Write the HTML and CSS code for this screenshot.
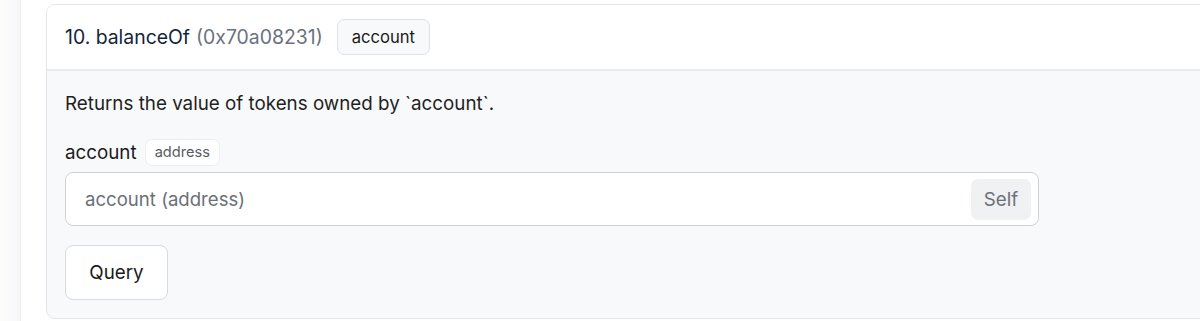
FILE: index.html
```html
<!DOCTYPE html>
<html>
<head>
<meta charset="utf-8">
<link rel="stylesheet" href="styles.css">
</head>
<body>
<div class="page">
  <aside class="rail"></aside>
  <main class="main">
    <section class="card">
      <header class="card-head">
        <span class="fn-name">10. balanceOf</span>
        <span class="fn-sel">(0x70a08231)</span>
        <span class="arg-chip">account</span>
      </header>
      <div class="card-body">
        <p class="desc">Returns the value of tokens owned by `account`.</p>
        <div class="field-label">
          <span class="label-text">account</span>
          <span class="type-chip">address</span>
        </div>
        <div class="input-wrap">
          <span class="placeholder">account (address)</span>
          <span class="self-btn">Self</span>
        </div>
        <div class="actions">
          <button class="query-btn">Query</button>
        </div>
      </div>
    </section>
  </main>
</div>
</body>
</html>
```

FILE: styles.css
```css
* { box-sizing: border-box; }
html, body {
  margin: 0;
  padding: 0;
  background: #ffffff;
  font-family: Inter, "Noto Sans", sans-serif;
  overflow: hidden;
}
.page {
  display: flex;
  width: 1200px;
  height: 321px;
}
.rail {
  width: 21px;
  flex: none;
  background: linear-gradient(to right, #fdfcfb, #f7f7f9);
  border-right: 1px solid #eeeef1;
}
.main {
  flex: 1;
  padding: 4px 0 0 25px;
  min-width: 0;
}
.card {
  width: 1200px;
  height: 315px;
  border: 1px solid #e4e5e9;
  border-radius: 9px;
  overflow: hidden;
  background: #f8f9fa;
  display: flex;
  flex-direction: column;
}
.card-head {
  height: 66px;
  flex: none;
  background: #ffffff;
  border-bottom: 2px solid #ebecf0;
  display: flex;
  align-items: center;
  padding-left: 18px;
  font-size: 19.4px;
}
.fn-name { color: #14253d; }
.fn-sel { color: #6b7280; margin-left: 6px; }
.arg-chip {
  margin-left: 14px;
  height: 36px;
  padding: 0 14px;
  display: inline-flex;
  align-items: center;
  background: #f8f9fa;
  border: 1px solid #dfe1e5;
  border-radius: 7px;
  font-size: 16.6px;
  color: #1a1a1a;
}
.card-body {
  padding: 22px 0 0 18px;
  display: flex;
  flex-direction: column;
}
.desc {
  margin: 0;
  font-size: 18.8px;
  color: #1f1f1f;
  line-height: 22px;
}
.field-label {
  margin-top: 23px;
  display: flex;
  align-items: center;
  gap: 8px;
  height: 28px;
}
.label-text { font-size: 18.8px; color: #1a1a1a; }
.type-chip {
  height: 27px;
  padding: 0 9px;
  display: inline-flex;
  align-items: center;
  background: #ffffff;
  border: 1px solid #eceef1;
  border-radius: 7px;
  font-size: 14.6px;
  color: #555b63;
}
.input-wrap {
  margin-top: 6px;
  width: 974px;
  height: 54px;
  background: #ffffff;
  border: 1px solid #cfd1d5;
  border-radius: 8px;
  display: flex;
  align-items: center;
  justify-content: space-between;
  padding: 0 7px 0 19px;
}
.placeholder { font-size: 18.6px; color: #6b7078; }
.self-btn {
  width: 60px;
  height: 41px;
  display: inline-flex;
  align-items: center;
  justify-content: center;
  background: #f0f1f2;
  border-radius: 7px;
  font-size: 18.7px;
  color: #6b7078;
}
.actions {
  margin-top: 19px;
  display: flex;
}
.query-btn {
  width: 103px;
  height: 55px;
  background: #ffffff;
  border: 1px solid #d8dadd;
  border-radius: 8px;
  font-family: inherit;
  font-size: 18.8px;
  color: #1a1a1a;
  padding: 0;
}
```
